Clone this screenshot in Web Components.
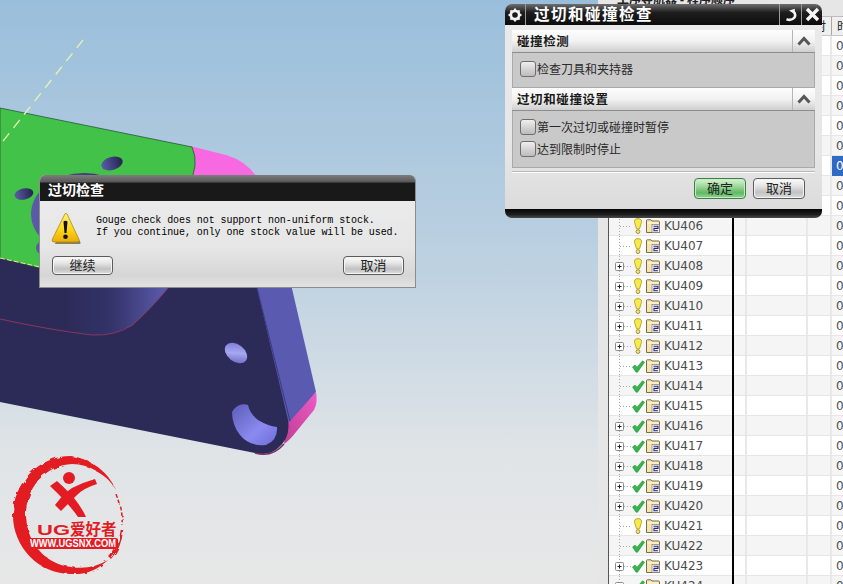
<!DOCTYPE html>
<html lang="zh">
<head>
<meta charset="utf-8">
<title>过切和碰撞检查</title>
<style>
  html, body { margin: 0; height: 100%; overflow: hidden; }
  body { font-family: "Liberation Sans", "Noto Sans CJK SC", sans-serif; }
  collision-dialog { left: 505px; top: 4px; }
  message-dialog { left: 39px; top: 175px; }
  ug-logo { left: 12px; top: 454px; }
</style>
</head>
<body>
<app-desktop>
  <cad-viewport></cad-viewport>
  <nav-panel></nav-panel>
  <ug-logo></ug-logo>
  <message-dialog></message-dialog>
  <collision-dialog></collision-dialog>
</app-desktop>

<script>
const CJK = `"Noto Sans CJK SC", "Liberation Sans", sans-serif`;

class AppDesktop extends HTMLElement {
  constructor() {
    super();
    this.attachShadow({ mode: "open" }).innerHTML = `
      <style>
        :host { display: flex; position: relative; width: 843px; height: 584px; overflow: hidden; }
      </style>
      <slot></slot>`;
  }
}

class CadViewport extends HTMLElement {
  constructor() {
    super();
    this.attachShadow({ mode: "open" }).innerHTML = `
      <style>
        :host { display: block; flex: 0 0 598px; height: 584px; }
        svg { display: block; }
      </style>
      <svg width="598" height="584" viewBox="0 0 598 584">
        <defs>
          <linearGradient id="sky" x1="0" y1="0" x2="0" y2="1">
            <stop offset="0" stop-color="#99bedb"/>
            <stop offset=".45" stop-color="#bdd1e1"/>
            <stop offset=".78" stop-color="#e0e4e7"/>
            <stop offset="1" stop-color="#e7e7e7"/>
          </linearGradient>
          <linearGradient id="bump" x1="0" y1="0" x2="1" y2="0">
            <stop offset="0" stop-color="#2c2b58"/>
            <stop offset=".45" stop-color="#34336a"/>
            <stop offset="1" stop-color="#5c5cae"/>
          </linearGradient>
          <linearGradient id="hole" x1="0" y1="0" x2="1" y2="1">
            <stop offset="0" stop-color="#6f70cf"/>
            <stop offset=".5" stop-color="#a6a8f2"/>
            <stop offset="1" stop-color="#5a5bb4"/>
          </linearGradient>
          <linearGradient id="bore" x1="0" y1="0" x2="1" y2="1">
            <stop offset="0" stop-color="#5c5cb8"/>
            <stop offset=".6" stop-color="#8a8af0"/>
            <stop offset="1" stop-color="#6d6dd8"/>
          </linearGradient>
          <linearGradient id="greenHole" x1="0" y1="0" x2="1" y2="0">
            <stop offset="0" stop-color="#5c5cab"/>
            <stop offset="1" stop-color="#23234a"/>
          </linearGradient>
          <linearGradient id="pinkEdge" x1="0" y1="1" x2="1" y2="0">
            <stop offset="0" stop-color="#c03c92"/>
            <stop offset="1" stop-color="#ee5cc6"/>
          </linearGradient>
        </defs>
        <rect width="598" height="584" fill="url(#sky)"/>
        <!-- pink fillet behind the green face -->
        <path d="M190 146 L226 155 Q246 161 256 176 L256 200 L190 200 Z" fill="#f868e0"/>
        <!-- side wall and fillet of the lower body -->
        <path d="M250 280 L290 280 L316 392 L290 424 L284 424 Z" fill="#5a5ab0"/>
        <path d="M316 392 Q318 403 314 410 L296 432 Q290 440 284 444 L286 424 L291 420 Z" fill="url(#pinkEdge)"/>
        <!-- dark lower face -->
        <path d="M0 258 L60 272 L255 280 L288 420 Q291 438 277 449 Q268 456 255 453 L0 402 Z" fill="#2c2b58"/>
        <path d="M257 288 L290 421" stroke="#3a3a80" stroke-width="1"/>
        <path d="M68 288 L168 288 Q150 310 132 326 Q112 336 92 335 L66 331 Z" fill="url(#bump)"/>
        <path d="M0 319 Q50 330 92 335 Q116 336 132 325 Q150 310 168 288" fill="none" stroke="#8a3560" stroke-width="1"/>
        <path d="M255 453 Q272 458 284 444" fill="none" stroke="#7b2a66" stroke-width="1.5"/>
        <!-- green top face -->
        <path d="M0 108 L192 147 Q200 165 188 186 L100 270 L40 268 L0 258 Z" fill="#43c249" stroke="#28553a" stroke-width=".8"/>
        <path d="M0 258 L40 267" stroke="#e8f08a" stroke-width="1" stroke-dasharray="5 2"/>
        <path d="M83 40 L0 145" stroke="#e8f4b0" stroke-width="1.300" stroke-dasharray="10 7"/>
        <!-- holes -->
        <ellipse cx="112" cy="163.500" rx="11" ry="6.500" transform="rotate(-16 112 163.500)" fill="url(#greenHole)"/>
        <ellipse cx="24" cy="194" rx="9.500" ry="5.500" transform="rotate(-12 24 194)" fill="url(#greenHole)"/>
        <ellipse cx="84" cy="214" rx="53" ry="41" fill="url(#greenHole)"/>
        <ellipse cx="48" cy="248" rx="12" ry="8" fill="url(#greenHole)"/>
        <ellipse cx="236" cy="353" rx="12.500" ry="8.500" transform="rotate(38 236 353)" fill="url(#hole)"/>
        <path d="M232 412 Q238 402 248 405 Q250 414 258 420 Q268 426 277 427 Q278 440 266 445 Q250 447 240 435 Q232 425 232 412 Z" fill="url(#bore)"/>
      </svg>`;
  }
}

class UgLogo extends HTMLElement {
  constructor() {
    super();
    this.attachShadow({ mode: "open" }).innerHTML = `
      <style>
        :host { display: block; position: absolute; width: 116px; height: 124px; }
        svg { display: block; }
        text { font-weight: 700; }
      </style>
      <svg width="116" height="124" viewBox="12 454 116 124">
        <defs>
          <filter id="brush" x="-10%" y="-10%" width="120%" height="120%">
            <feTurbulence type="fractalNoise" baseFrequency=".13" numOctaves="2" seed="4"/>
            <feDisplacementMap in="SourceGraphic" scale="5"/>
          </filter>
        </defs>
        <g filter="url(#brush)">
          <path fill="#e31b23" fill-rule="evenodd" d="M71 456 A58 59 0 1 0 71 574 A52 58 0 0 0 108 560 A53 52 0 0 1 71 567 A50 52 0 0 1 26 516 A48 50 0 0 1 72 464 A52 50 0 0 1 116 490 A58 56 0 0 0 71 456 Z"/>
          <path d="M117 495 Q123 510 122 525" fill="none" stroke="#e31b23" stroke-width="1.500" stroke-dasharray="4 2"/>
          <path d="M122 530 Q120 548 110 558" fill="none" stroke="#e31b23" stroke-width="2.500"/>
        </g>
        <circle cx="69" cy="478" r="6" fill="#e31b23"/>
        <path fill="#e31b23" d="M50 486 L57 481 Q68 491 74 498 Q82 508 86 517 L78 517 Q70 505 50 486 Z"/>
        <path fill="#e31b23" d="M95 479 L97 484 Q84 488 77 495 Q68 504 61 511 L55 505 Q64 493 72 488 Q84 482 95 479 Z"/>
        <text x="37" y="535" fill="#e31b23" font-family="Liberation Sans, sans-serif" font-size="15" textLength="33" lengthAdjust="spacingAndGlyphs">UG</text>
        <text x="70" y="535" fill="#e31b23" font-family="${CJK}" font-size="15.500">爱好者</text>
        <rect x="28" y="538" width="90" height="11" rx="2" fill="#e31b23"/>
        <text x="30" y="547" fill="#fff" font-family="Liberation Sans, sans-serif" font-size="10" textLength="86" lengthAdjust="spacingAndGlyphs">WWW.UGSNX.COM</text>
      </svg>`;
  }
}

const STATUS_ICONS = {
  bulb: `<svg width="10" height="17" viewBox="0 0 10 17">
      <path d="M5 .6 C8 .6 9 2.500 8.400 4.500 L6.500 10.800 L3.500 10.800 L1.600 4.500 C1 2.500 2 .6 5 .6 Z" fill="#f7ea4e" stroke="#b9a226" stroke-width=".9"/>
      <circle cx="5" cy="13.600" r="1.900" fill="#f3e48c" stroke="#a8912a" stroke-width="1"/>
    </svg>`,
  check: `<svg width="13" height="13" viewBox="0 0 13 13">
      <path d="M.5 7 L3 5 L5 7.200 L10.500 .8 L12.600 2.200 L5.600 12.200 L4 12.200 Z" fill="#37b54a" stroke="#1f8f34" stroke-width=".5"/>
    </svg>`
};

class TreeStatus extends HTMLElement {
  connectedCallback() {
    if (this.shadowRoot) return;
    this.attachShadow({ mode: "open" }).innerHTML = `
      <style>
        :host { display: flex; align-items: center; justify-content: center; width: 14px; height: 20px; flex: none; }
        svg { display: block; }
      </style>
      ${STATUS_ICONS[this.getAttribute("kind")]}`;
  }
}

class NavRow extends HTMLElement {
  connectedCallback() {
    if (this.shadowRoot) return;
    const name = this.getAttribute("name") || "";
    const open = this.hasAttribute("expandable");
    const even = this.hasAttribute("shaded");
    const plus = `<svg class="plus" width="9" height="9" viewBox="0 0 9 9">
        <rect x=".5" y=".5" width="8" height="8" rx="1" fill="#fff" stroke="#8a8a8a"/>
        <path d="M2.500 4.500 H6.500 M4.500 2.500 V6.500" stroke="#222"/>
      </svg>`;
    const icons = name ? `
      <tree-status kind="${this.getAttribute("status")}"></tree-status>
      <svg class="folder" width="14" height="14" viewBox="0 0 14 14">
        <path d="M.5 3 V1.500 Q.5 .8 1.300 .8 H5 L6 2 H12.500 Q13.500 2 13.500 3 V13.500 H.5 Z" fill="#f4e6b4" stroke="#7a6c42"/>
        <path d="M1.500 4 H12.500" stroke="#fff8dc"/>
        <rect x="6" y="5.500" width="7.500" height="8" fill="#f5f5fb" stroke="#7a6c42" stroke-width=".6"/>
        <path d="M7.500 7.300 H12 V9.400 H8 V11.800 H12" fill="none" stroke="#24248c" stroke-width="1.100"/>
      </svg>
      <span class="name">${name}</span>` : "";
    this.attachShadow({ mode: "open" }).innerHTML = `
      <style>
        :host {
          display: grid;
          grid-template-columns: 125px 13px 61px 24px 1fr;
          height: 20px;
          box-sizing: border-box;
          border-bottom: 1px solid #e6e6e6;
          background: ${even ? "#f5f5f5" : "#fff"};
          font: 12px "DejaVu Sans", sans-serif;
          color: #4c4c4c;
        }
        .cell { border-right: 2px solid #e8e8e8; height: 20px; box-sizing: border-box; }
        .tree {
          display: flex;
          align-items: center;
          padding-left: 6px;
          border-right: 2px solid #000;
          background: repeating-linear-gradient(#a8a8a8 0 1px, transparent 1px 3px) 10px 0 / 1px 100% no-repeat;
          overflow: hidden;
        }
        .twist { width: 9px; flex: none; height: 9px; }
        .twist.empty { width: 5px; }
        .plus { display: block; }
        .dots {
          flex: none; height: 1px; width: 7px;
          background: repeating-linear-gradient(90deg, #a8a8a8 0 1px, transparent 1px 3px);
        }
        .dots.stub { width: 11px; }
        .folder { display: block; flex: none; margin-left: 1px; }
        .name { margin-left: 4px; white-space: nowrap; }
        .value { padding-left: 4px; line-height: 20px; overflow: hidden; }
        :host([selected]) .value { background: #316ac5; color: #fff; }
      </style>
      <div class="cell tree">
        ${open ? `<span class="twist">${plus}</span><span class="dots"></span>`
               : `<span class="twist empty"></span><span class="dots stub"></span>`}
        ${icons}
      </div>
      <div class="cell"></div>
      <div class="cell"></div>
      <div class="cell"></div>
      <div class="value">0</div>`;
  }
}

class NavPanel extends HTMLElement {
  constructor() {
    super();
    const bulbs = new Set([406, 407, 408, 409, 410, 411, 412, 421]);
    const open = new Set([408, 409, 410, 411, 412, 416, 417, 418, 419, 420, 423, 424]);
    let rows = "";
    for (let n = 397; n <= 424; n++) {
      const shown = n >= 406;
      rows += `<nav-row ${shown ? `name="KU${n}" status="${bulbs.has(n) ? "bulb" : "check"}"` : ""}
        ${open.has(n) ? "expandable" : ""} ${n % 2 === 0 ? "shaded" : ""} ${n === 403 ? "selected" : ""}></nav-row>`;
    }
    this.attachShadow({ mode: "open" }).innerHTML = `
      <style>
        :host {
          display: flex;
          flex-direction: column;
          flex: 0 0 245px;
          height: 584px;
          overflow: hidden;
          box-sizing: border-box;
          background: #e6e6e6;
          font: 12px ${CJK};
          color: #222;
        }
        .title {
          flex: none;
          height: 23px;
          margin-top: -7px;
          margin-left: 19px;
          line-height: 12px;
          font-weight: 700;
          white-space: nowrap;
        }
        .table { margin-left: 10px; border-left: 1px solid #555; flex: 1; background: #fff; }
        .head {
          display: grid;
          grid-template-columns: 125px 13px 61px 24px 1fr;
          height: 20px;
          box-sizing: border-box;
          border-top: 1px solid #bdbdbd;
          border-bottom: 1px solid #c8c8c8;
          background: #efefef;
          line-height: 18px;
        }
        .head div { border-right: 1px solid #a8a8a8; overflow: hidden; white-space: nowrap; }
        .head div:last-child { border-right: 0; padding-left: 5px; }
        .head .time { padding-left: 6px; }
      </style>
      <div class="title">工序导航器 - 程序顺序</div>
      <div class="table">
        <div class="head"><div></div><div></div><div></div><div class="time">时</div><div>时</div></div>
        ${rows}
      </div>`;
  }
}

class UgButton extends HTMLElement {
  constructor() {
    super();
    this.attachShadow({ mode: "open" }).innerHTML = `
      <style>
        :host {
          display: inline-flex;
          align-items: center;
          justify-content: center;
          box-sizing: border-box;
          width: var(--button-width, 52px);
          height: var(--button-height, 21px);
          padding-bottom: 2px;
          border: 1px solid #5c5c5c;
          border-radius: 4px;
          background: linear-gradient(#fbfbfb 0, #e6e6e6 35%, #c2c2c2 70%, #dcdcdc 100%);
          box-shadow: inset 0 0 0 1px #f4f4f4;
          font: 13px ${CJK};
          color: #222;
        }
        :host([primary]) {
          border-color: #3d7f4d;
          background: linear-gradient(#d9f3d3 0, #a4dba0 35%, #62b966 72%, #8dd68d 100%);
          box-shadow: inset 0 0 0 1px #c5ecc1;
        }
      </style>
      <slot></slot>`;
  }
}

class UgCheckbox extends HTMLElement {
  constructor() {
    super();
    this.attachShadow({ mode: "open" }).innerHTML = `
      <style>
        :host { display: flex; align-items: center; height: 16px; font: 12px ${CJK}; color: #2a2a2a; white-space: nowrap; }
        .box {
          width: 16px; height: 16px; box-sizing: border-box; flex: none; margin-right: 1px;
          border: 1px solid #6d6d6d; border-radius: 3px;
          background: linear-gradient(#efefef, #d2d2d2 55%, #bcbcbc);
        }
        .label { position: relative; top: -1px; }
      </style>
      <span class="box"></span><span class="label"><slot></slot></span>`;
  }
}

class UgSection extends HTMLElement {
  constructor() {
    super();
    this.attachShadow({ mode: "open" }).innerHTML = `
      <style>
        :host { display: block; font: 12px ${CJK}; }
        header {
          display: flex; align-items: center; height: 23px; box-sizing: border-box;
          background: linear-gradient(#fdfdfd, #f2f2f2 50%, #cfcfcf);
          border-bottom: 1px solid #8d8d8d;
        }
        .title { flex: 1; padding: 0 0 2px 5px; font-size: 12.500px; font-weight: 700; color: #1a1a1a; letter-spacing: .6px; white-space: nowrap; }
        .toggle { width: 22px; height: 22px; display: flex; align-items: center; justify-content: center; border-left: 1px solid #b5b5b5; }
        .body {
          display: flex; flex-direction: column; gap: 6px; box-sizing: border-box;
          min-height: var(--body-height, 35px);
          padding: 8px 7px 0;
          background: #c9c9c9;
          border: 1px solid #a9a9a9;
          border-top: 0;
        }
        svg { display: block; }
      </style>
      <header>
        <span class="title"></span>
        <span class="toggle">
          <svg width="14" height="10" viewBox="0 0 14 10"><path d="M1.500 8.500 L7 2.500 L12.500 8.500" fill="none" stroke="#565656" stroke-width="3"/></svg>
        </span>
      </header>
      <div class="body"><slot></slot></div>`;
  }
  connectedCallback() {
    this.shadowRoot.querySelector(".title").textContent = this.getAttribute("heading") || "";
  }
}

class CollisionDialog extends HTMLElement {
  constructor() {
    super();
    this.attachShadow({ mode: "open" }).innerHTML = `
      <style>
        :host {
          display: flex; flex-direction: column;
          position: absolute; width: 317px; height: 214px;
          border-radius: 7px; overflow: hidden;
          background: linear-gradient(#eaeaea, #e6e6e6 70%, #d9d9d9);
        }
        .bar {
          display: flex; align-items: stretch; height: 21px; flex: none;
          background: linear-gradient(#6e6e6e 0, #1e1e1e 40%, #0c0c0c 100%);
          color: #fff;
        }
        .slotbox { display: flex; align-items: center; justify-content: center; box-sizing: border-box; width: 21px; flex: none; }
        .gear { border-right: 1px solid #9a9a9a; }
        .caption { flex: 1; padding: 0 0 2px 8px; font: 700 15.500px/18px ${CJK}; letter-spacing: 1.500px; white-space: nowrap; }
        .sep { border-left: 1px solid #9a9a9a; width: 22px; }
        .content { flex: 1; display: flex; flex-direction: column; padding: 5px 7px 0; }
        .rule { margin-top: 4px; border-top: 1px solid #fff; box-shadow: 0 -1px 0 #b8b8b8; }
        .actions { display: flex; justify-content: flex-end; gap: 7px; padding: 5px 10px 0 0; }
        .foot { height: 9px; flex: none; background: linear-gradient(#050505 0, #1d1d1d 60%, #4a4a4a 100%); }
        svg { display: block; }
      </style>
      <div class="bar">
        <span class="slotbox gear">
          <svg width="14" height="14" viewBox="0 0 14 14">
            <g stroke="#f4f4f4" stroke-width="2"><path d="M7 .5 V13.500 M.5 7 H13.500 M2.400 2.400 L11.600 11.600 M11.600 2.400 L2.400 11.600"/></g>
            <circle cx="7" cy="7" r="4.200" fill="#1a1a1a" stroke="#f4f4f4" stroke-width="2.800"/>
          </svg>
        </span>
        <span class="caption">过切和碰撞检查</span>
        <span class="slotbox sep">
          <svg width="14" height="14" viewBox="0 0 14 14">
            <path d="M2.500 11.200 Q7.500 13 10.500 9.500 Q12.200 6.200 9.600 3.800" fill="none" stroke="#f2f2f2" stroke-width="2.600"/>
            <path d="M5 2.500 L10.800 .8 L10.800 6.200 Z" fill="#f2f2f2"/>
          </svg>
        </span>
        <span class="slotbox sep" style="width:21px">
          <svg width="15" height="15" viewBox="0 0 15 15"><path d="M2 2 L13 13 M13 2 L2 13" stroke="#f6f6f6" stroke-width="3.400"/></svg>
        </span>
      </div>
      <div class="content">
        <ug-section heading="碰撞检测" style="--body-height:35px">
          <ug-checkbox>检查刀具和夹持器</ug-checkbox>
        </ug-section>
        <ug-section heading="过切和碰撞设置" style="--body-height:57px">
          <ug-checkbox>第一次过切或碰撞时暂停</ug-checkbox>
          <ug-checkbox>达到限制时停止</ug-checkbox>
        </ug-section>
        <div class="rule"></div>
        <div class="actions">
          <ug-button primary>确定</ug-button>
          <ug-button>取消</ug-button>
        </div>
      </div>
      <div class="foot"></div>`;
  }
}

class MessageDialog extends HTMLElement {
  constructor() {
    super();
    this.attachShadow({ mode: "open" }).innerHTML = `
      <style>
        :host {
          display: flex; flex-direction: column;
          position: absolute; width: 377px; height: 113px; box-sizing: border-box;
          border: 1px solid #8c8c8c; border-top: 0; border-radius: 6px 6px 0 0;
          overflow: hidden;
          background: linear-gradient(#ededed, #e6e6e6 65%, #d6d6d6 90%, #e2e2e2);
          --button-width: 61px; --button-height: 19px;
        }
        .bar {
          height: 26px; flex: none; box-sizing: border-box; padding: 6px 0 0 8px;
          background: linear-gradient(#7d7d7d 0, #585858 7px, #191919 8px, #191919 100%);
          font: 700 14px/17px ${CJK}; color: #fff; white-space: nowrap;
        }
        .message { flex: 1; display: flex; align-items: flex-start; padding: 11px 0 0 11px; }
        svg { display: block; flex: none; }
        pre { margin: 0 0 0 15px; padding-top: 3px; font: 10px/12px "Liberation Mono", monospace; letter-spacing: -.07px; color: #000; }
        .actions { display: flex; justify-content: space-between; padding: 0 11px 12px 12px; }
      </style>
      <div class="bar">过切检查</div>
      <div class="message">
        <svg width="30" height="33" viewBox="0 0 30 33">
          <defs>
            <linearGradient id="warn" x1="0" y1="0" x2="0" y2="1">
              <stop offset="0" stop-color="#fff27a"/><stop offset=".55" stop-color="#fcd71c"/><stop offset="1" stop-color="#e9ad08"/>
            </linearGradient>
          </defs>
          <path d="M15 3 L29.500 30.500 Q29.800 32 28 32 L4 32 Z" fill="#6e5a28" opacity=".75"/>
          <path d="M14 1.800 Q15 1 16 2 L28 27.500 Q28.700 29.800 26.500 30 L3 30 Q.4 29.800 1.200 27.500 Z" fill="url(#warn)" stroke="#b08a10" stroke-width=".8"/>
          <path d="M12.500 9.500 Q14.500 8 16.500 9.500 L15.500 21 L13.500 21 Z" fill="#111"/>
          <circle cx="14.500" cy="24.800" r="2.300" fill="#111"/>
        </svg>
        <pre>Gouge check does not support non-uniform stock.
If you continue, only one stock value will be used.</pre>
      </div>
      <div class="actions">
        <ug-button>继续</ug-button>
        <ug-button>取消</ug-button>
      </div>`;
  }
}

customElements.define("app-desktop", AppDesktop);
customElements.define("cad-viewport", CadViewport);
customElements.define("ug-logo", UgLogo);
customElements.define("tree-status", TreeStatus);
customElements.define("nav-row", NavRow);
customElements.define("nav-panel", NavPanel);
customElements.define("ug-button", UgButton);
customElements.define("ug-checkbox", UgCheckbox);
customElements.define("ug-section", UgSection);
customElements.define("collision-dialog", CollisionDialog);
customElements.define("message-dialog", MessageDialog);
</script>
</body>
</html>
